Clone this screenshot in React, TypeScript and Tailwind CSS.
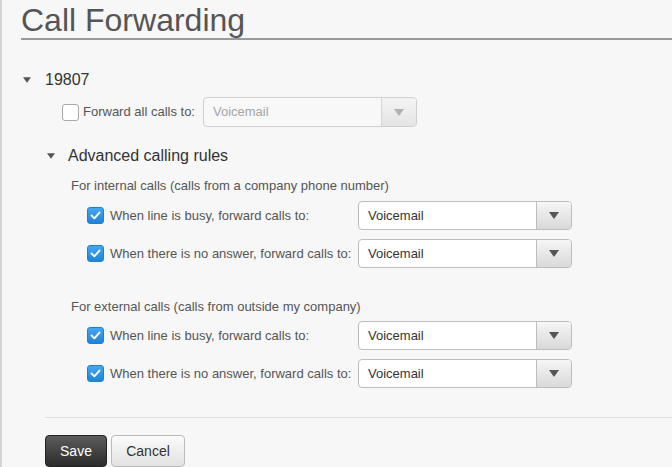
const Caret = ({ className }: { className: string }) => (
  <svg viewBox="0 0 10 7" className={className}>
    <path d="M0 0 L10 0 L5 7 Z" fill="currentColor" />
  </svg>
);

const CheckBox = ({ checked }: { checked: boolean }) =>
  checked ? (
    <span className="flex h-[17px] w-[17px] shrink-0 items-center justify-center rounded-[3px] border border-[#1f7fd0] bg-gradient-to-b from-[#45a6f0] to-[#1d84d8]">
      <svg viewBox="0 0 17 17" className="h-[17px] w-[17px]">
        <path d="M4 8.5 L7.2 11.7 L13 5.2" fill="none" stroke="white" strokeWidth="2.2" strokeLinecap="round" strokeLinejoin="round" />
      </svg>
    </span>
  ) : (
    <span className="h-[17px] w-[17px] shrink-0 rounded-[3px] border border-[#a8a8a8] bg-white" />
  );

const Select = ({ disabled, height }: { disabled?: boolean; height: string }) => (
  <div
    className={`flex w-[214px] ${height} overflow-hidden rounded-[4px] border ${
      disabled ? "border-[#cfcfcf] bg-[#f8f8f8]" : "border-[#bdbdbd] bg-white"
    }`}
  >
    <span className={`flex flex-1 items-center pl-[9px] text-[13px] ${disabled ? "text-[#a5a5a5]" : "text-[#333]"}`}>
      Voicemail
    </span>
    <span
      className={`flex w-[35px] items-center justify-center border-l ${
        disabled
          ? "border-[#d6d6d6] bg-gradient-to-b from-[#f4f4f4] to-[#e4e4e4] text-[#b0b0b0]"
          : "border-[#bdbdbd] bg-gradient-to-b from-[#f6f6f6] to-[#d9d9d9] text-[#555]"
      }`}
    >
      <Caret className="h-[7px] w-[10px]" />
    </span>
  </div>
);

const RuleRow = ({ label }: { label: string }) => (
  <div className="ml-[85px] flex h-[29px] items-center">
    <CheckBox checked />
    <span className="ml-[6px] w-[248px] text-[13px] text-[#555]">{label}</span>
    <Select height="h-[29px]" />
  </div>
);

export default function App() {
  return (
    <div className="min-h-screen w-full overflow-hidden border-l-2 border-[#d4d4d4] bg-[#f7f7f7] font-['Liberation_Sans',Arial,sans-serif]">
      <div className="pt-[2px] pl-[19px]">
        <h1 className="border-b-2 border-[#9a9a9a] text-[32px] leading-[36px] text-[#555]">Call Forwarding</h1>
      </div>

      <div className="mt-[30px] ml-[21px] flex items-center text-[16px] leading-[20px] text-[#333]">
        <Caret className="mr-[14px] h-[6px] w-[8px] text-[#555]" />
        <span>19807</span>
      </div>

      <div className="mt-[7px] ml-[60px] flex h-[30px] items-center">
        <CheckBox checked={false} />
        <span className="ml-[4px] mr-[8px] text-[13px] text-[#555]">Forward all calls to:</span>
        <Select disabled height="h-[30px]" />
      </div>

      <div className="mt-[19px] ml-[45px] flex items-center text-[16px] leading-[20px] text-[#333]">
        <Caret className="mr-[13px] h-[6px] w-[8px] text-[#555]" />
        <span>Advanced calling rules</span>
      </div>

      <p className="mt-[12px] ml-[69px] text-[13px] leading-[16px] text-[#555]">
        For internal calls (calls from a company phone number)
      </p>
      <div className="mt-[7px] flex flex-col gap-[9px]">
        <RuleRow label="When line is busy, forward calls to:" />
        <RuleRow label="When there is no answer, forward calls to:" />
      </div>

      <p className="mt-[31px] ml-[69px] text-[13px] leading-[16px] text-[#555]">
        For external calls (calls from outside my company)
      </p>
      <div className="mt-[6px] flex flex-col gap-[9px]">
        <RuleRow label="When line is busy, forward calls to:" />
        <RuleRow label="When there is no answer, forward calls to:" />
      </div>

      <div className="mt-[29px] ml-[43px] border-t border-[#dcdcdc]" />

      <div className="mt-[17px] ml-[43px] flex gap-[4px] text-[14px]">
        <button className="h-[32px] w-[62px] rounded-[4px] border border-[#222] bg-gradient-to-b from-[#5c5c5c] to-[#2c2c2c] text-white">
          Save
        </button>
        <button className="h-[32px] w-[74px] rounded-[4px] border border-[#bbb] bg-gradient-to-b from-[#fbfbfb] to-[#e2e2e2] text-[#333]">
          Cancel
        </button>
      </div>
    </div>
  );
}
